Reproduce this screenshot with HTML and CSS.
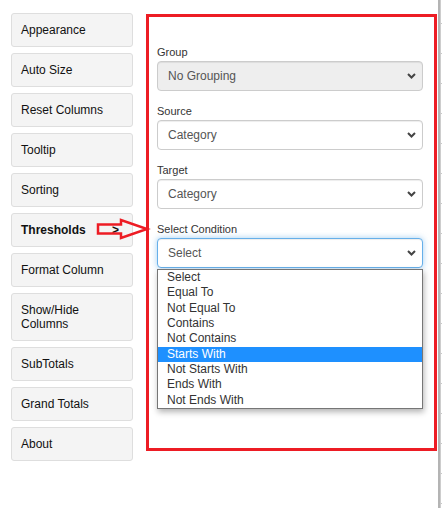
FILE: index.html
```html
<!DOCTYPE html>
<html>
<head>
<meta charset="utf-8">
<link rel="stylesheet" href="styles.css">
</head>
<body>
<div class="page">
  <nav class="sidebar">
    <div class="nav-btn">Appearance</div>
    <div class="nav-btn">Auto Size</div>
    <div class="nav-btn">Reset Columns</div>
    <div class="nav-btn">Tooltip</div>
    <div class="nav-btn">Sorting</div>
    <div class="nav-btn nav-active"><span>Thresholds</span><span class="caret">&gt;</span></div>
    <div class="nav-btn">Format Column</div>
    <div class="nav-btn">Show/Hide Columns</div>
    <div class="nav-btn">SubTotals</div>
    <div class="nav-btn">Grand Totals</div>
    <div class="nav-btn">About</div>
  </nav>

  <section class="panel">
    <div class="field">
      <div class="label">Group</div>
      <div class="select select-disabled">
        <span>No Grouping</span>
        <svg class="chev" width="9" height="6" viewBox="0 0 9 6"><polyline points="1,1 4.5,4.5 8,1" fill="none" stroke="#444" stroke-width="2"/></svg>
      </div>
    </div>
    <div class="field">
      <div class="label">Source</div>
      <div class="select">
        <span>Category</span>
        <svg class="chev" width="9" height="6" viewBox="0 0 9 6"><polyline points="1,1 4.5,4.5 8,1" fill="none" stroke="#444" stroke-width="2"/></svg>
      </div>
    </div>
    <div class="field">
      <div class="label">Target</div>
      <div class="select">
        <span>Category</span>
        <svg class="chev" width="9" height="6" viewBox="0 0 9 6"><polyline points="1,1 4.5,4.5 8,1" fill="none" stroke="#444" stroke-width="2"/></svg>
      </div>
    </div>
    <div class="field">
      <div class="label">Select Condition</div>
      <div class="select-wrap">
        <div class="select select-focus">
          <span>Select</span>
          <svg class="chev" width="9" height="6" viewBox="0 0 9 6"><polyline points="1,1 4.5,4.5 8,1" fill="none" stroke="#444" stroke-width="2"/></svg>
        </div>
        <ul class="options">
          <li>Select</li>
          <li>Equal To</li>
          <li>Not Equal To</li>
          <li>Contains</li>
          <li>Not Contains</li>
          <li class="opt-hl">Starts With</li>
          <li>Not Starts With</li>
          <li>Ends With</li>
          <li>Not Ends With</li>
        </ul>
      </div>
    </div>
  </section>

  <div class="edge"></div>

  <svg class="arrow" width="56" height="26" viewBox="0 0 56 26">
    <polygon points="3,7.5 26,7.5 26,3 52,12 26,21 26,16.5 3,16.5" fill="none" stroke="#ed1c24" stroke-width="2.5" stroke-linejoin="miter"/>
  </svg>
</div>
</body>
</html>
```

FILE: styles.css
```css
* { box-sizing: border-box; }

html, body {
  margin: 0;
  padding: 0;
  background: #fff;
  font-family: "Liberation Sans", Arial, sans-serif;
}

.page {
  position: relative;
  width: 442px;
  height: 508px;
  overflow: hidden;
  display: flex;
  align-items: flex-start;
  padding-left: 11px;
}

.sidebar {
  width: 122px;
  margin-top: 13px;
  display: flex;
  flex-direction: column;
  gap: 6px;
}

.nav-btn {
  background: #f4f4f4;
  border: 1px solid #dedede;
  border-radius: 3px;
  padding: 9px 20px 9px 9px;
  font-size: 12px;
  line-height: 14px;
  color: #111;
}

.nav-active {
  font-weight: bold;
  display: flex;
  justify-content: space-between;
  padding-right: 13px;
}

.caret {
  font-weight: bold;
  margin-right: 0;
}

.panel {
  margin-left: 13px;
  margin-top: 14px;
  width: 291px;
  height: 437px;
  border: 3px solid #ed1c24;
  padding: 28px 11px 0 8px;
}

.field {
  margin-bottom: 13px;
}

.label {
  font-size: 11px;
  line-height: 14px;
  color: #333;
  margin-bottom: 2px;
}

.select {
  height: 30px;
  border: 1px solid #ccc;
  border-radius: 4px;
  background: #fff;
  display: flex;
  align-items: center;
  justify-content: space-between;
  padding: 0 5px 0 10px;
  font-size: 12px;
  color: #555;
  box-shadow: inset 0 1px 1px rgba(0, 0, 0, 0.075);
}

.select-disabled {
  background: #eee;
}

.select-focus {
  border-color: #66afe9;
  box-shadow: inset 0 1px 1px rgba(0, 0, 0, 0.075), 0 0 6px rgba(102, 175, 233, 0.6);
}

.chev {
  display: block;
  margin-right: 1px;
}

.select-wrap {
  position: relative;
}

.options {
  position: absolute;
  left: 0;
  right: 0;
  top: 31px;
  margin: 0;
  padding: 0;
  list-style: none;
  background: #fff;
  border: 1px solid #767676;
  box-shadow: 1px 3px 6px rgba(0, 0, 0, 0.3);
  font-size: 12px;
  color: #333;
}

.options li {
  height: 15.33px;
  line-height: 15.33px;
  padding-left: 9px;
}

.options .opt-hl {
  background: #1e90ff;
  color: #fff;
}

.edge {
  margin-left: 1px;
  width: 4px;
  height: 508px;
  background:
    linear-gradient(to right, #b4b4b4 0, #b4b4b4 2px, #cdcdcd 2px, #cdcdcd 3px, transparent 3px),
    repeating-linear-gradient(to bottom, #fff 0, #fff 23px, #c8c8c8 23px, #c8c8c8 24px, #fff 24px, #fff 30px);
}

.arrow {
  position: absolute;
  left: 95px;
  top: 217px;
}
```
